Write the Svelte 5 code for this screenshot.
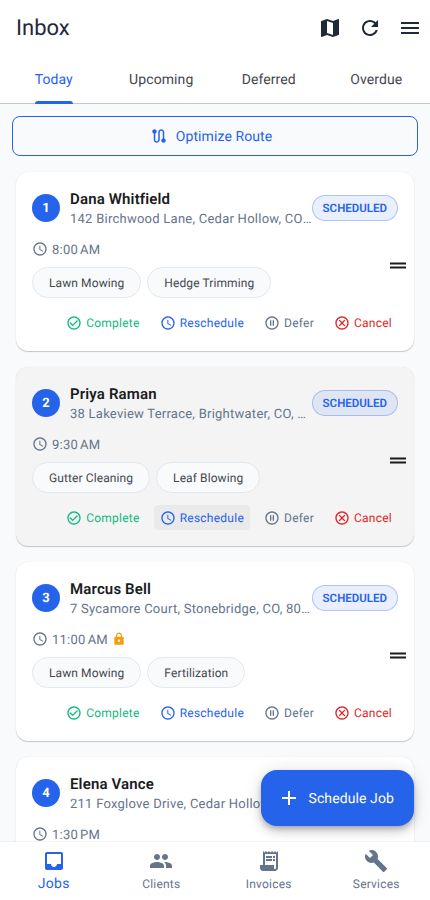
<script>
    // Material icon paths, 24x24
    const icons = {
        map: "M20.5 3l-.16.03L15 5.1 9 3 3.36 4.9c-.21.07-.36.25-.36.48V20.5c0 .28.22.5.5.5l.16-.03L9 18.9l6 2.1 5.64-1.9c.21-.07.36-.25.36-.48V3.5c0-.28-.22-.5-.5-.5zM15 19l-6-2.11V5l6 2.11V19z",
        refresh:
            "M17.65 6.35C16.2 4.9 14.21 4 12 4c-4.42 0-7.99 3.58-7.99 8s3.57 8 7.99 8c3.73 0 6.84-2.55 7.73-6h-2.08c-.82 2.33-3.04 4-5.65 4-3.31 0-6-2.69-6-6s2.69-6 6-6c1.66 0 3.14.69 4.22 1.78L13 11h7V4l-2.35 2.35z",
        menu: "M3 18h18v-2H3v2zm0-5h18v-2H3v2zm0-7v2h18V6H3z",
        route: "M19 15.18V7c0-2.21-1.79-4-4-4s-4 1.79-4 4v10c0 1.1-.9 2-2 2s-2-.9-2-2V8.82C8.16 8.4 9 7.3 9 6c0-1.66-1.34-3-3-3S3 4.34 3 6c0 1.3.84 2.4 2 2.82V17c0 2.21 1.79 4 4 4s4-1.79 4-4V7c0-1.1.9-2 2-2s2 .9 2 2v8.18c-1.16.41-2 1.51-2 2.82 0 1.66 1.34 3 3 3s3-1.34 3-3c0-1.3-.84-2.4-2-2.82z",
        schedule:
            "M11.99 2C6.47 2 2 6.48 2 12s4.47 10 9.99 10C17.52 22 22 17.52 22 12S17.52 2 11.99 2zM12 20c-4.42 0-8-3.58-8-8s3.58-8 8-8 8 3.58 8 8-3.58 8-8 8zm.5-13H11v6l5.25 3.15.75-1.23-4.5-2.67z",
        check: "M16.59 7.58L10 14.17l-3.59-3.58L5 12l5 5 8-8-1.41-1.42zM12 2C6.48 2 2 6.48 2 12s4.48 10 10 10 10-4.48 10-10S17.52 2 12 2zm0 18c-4.42 0-8-3.58-8-8s3.58-8 8-8 8 3.58 8 8-3.58 8-8 8z",
        pause: "M9 16h2V8H9v8zm3-14C6.48 2 2 6.48 2 12s4.48 10 10 10 10-4.48 10-10S17.52 2 12 2zm0 18c-4.41 0-8-3.59-8-8s3.59-8 8-8 8 3.59 8 8-3.59 8-8 8zm1-4h2V8h-2v8z",
        cancel: "M12 2C6.47 2 2 6.47 2 12s4.47 10 10 10 10-4.47 10-10S17.53 2 12 2zm0 18c-4.41 0-8-3.59-8-8s3.59-8 8-8 8 3.59 8 8-3.59 8-8 8zm3.59-13L12 10.59 8.41 7 7 8.41 10.59 12 7 15.59 8.41 17 12 13.41 15.59 17 17 15.59 13.41 12 17 8.41z",
        lock: "M18 8h-1V6c0-2.76-2.24-5-5-5S7 3.24 7 6v2H6c-1.1 0-2 .9-2 2v10c0 1.1.9 2 2 2h12c1.1 0 2-.9 2-2V10c0-1.1-.9-2-2-2zm-6 9c-1.1 0-2-.9-2-2s.9-2 2-2 2 .9 2 2-.9 2-2 2zm3.1-9H8.9V6c0-1.71 1.39-3.1 3.1-3.1 1.71 0 3.1 1.39 3.1 3.1v2z",
        drag: "M20 9H4v2h16V9zM4 15h16v-2H4v2z",
        add: "M19 13h-6v6h-2v-6H5v-2h6V5h2v6h6v2z",
        inbox: "M19 3H4.99C3.88 3 3.01 3.9 3.01 5L3 19c0 1.1.88 2 1.99 2H19c1.1 0 2-.9 2-2V5c0-1.1-.9-2-2-2zm0 12h-4c0 1.66-1.34 3-3 3s-3-1.34-3-3H4.99V5H19v10z",
        people: "M16 11c1.66 0 2.99-1.34 2.99-3S17.66 5 16 5c-1.66 0-3 1.34-3 3s1.34 3 3 3zm-8 0c1.66 0 2.99-1.34 2.99-3S9.66 5 8 5C6.34 5 5 6.34 5 8s1.34 3 3 3zm0 2c-2.33 0-7 1.17-7 3.5V19h14v-2.5c0-2.33-4.67-3.5-7-3.5zm8 0c-.29 0-.62.02-.97.05 1.16.84 1.97 1.97 1.97 3.45V19h6v-2.5c0-2.33-4.67-3.5-7-3.5z",
        receipt:
            "M19.5 3.5L18 2l-1.5 1.5L15 2l-1.5 1.5L12 2l-1.5 1.5L9 2 7.5 3.5 6 2v14H3v3c0 1.66 1.34 3 3 3h12c1.66 0 3-1.34 3-3V2l-1.5 1.5zM19 19c0 .55-.45 1-1 1s-1-.45-1-1v-3H8V5h11v14zM9 7h6v2H9zM16 7h2v2h-2zM9 10h6v2H9zM16 10h2v2h-2z",
        build: "M22.7 19l-9.1-9.1c.9-2.3.4-5-1.5-6.9-2-2-5-2.4-7.4-1.3L9 6 6 9 1.6 4.7C.4 7.1.9 10.1 2.9 12.1c1.9 1.9 4.6 2.4 6.9 1.5l9.1 9.1c.4.4 1 .4 1.4 0l2.3-2.3c.5-.4.5-1.1.1-1.4z",
    };

    const tabs = ["Today", "Upcoming", "Deferred", "Overdue"];
    let activeTab = $state("Today");

    const jobs = [
        {
            name: "Dana Whitfield",
            address: "142 Birchwood Lane, Cedar Hollow, CO 80401",
            time: "8:00",
            period: "AM",
            services: ["Lawn Mowing", "Hedge Trimming"],
        },
        {
            name: "Priya Raman",
            address: "38 Lakeview Terrace, Brightwater, CO, 80402",
            time: "9:30",
            period: "AM",
            services: ["Gutter Cleaning", "Leaf Blowing"],
        },
        {
            name: "Marcus Bell",
            address: "7 Sycamore Court, Stonebridge, CO, 80403",
            time: "11:00",
            period: "AM",
            locked: true,
            services: ["Lawn Mowing", "Fertilization"],
        },
        {
            name: "Elena Vance",
            address: "211 Foxglove Drive, Cedar Hollow, CO 80401",
            time: "1:30",
            period: "PM",
            services: ["Lawn Mowing"],
        },
    ];
    let pressed = $state(1);

    const actions = [
        { label: "Complete", icon: "check" },
        { label: "Reschedule", icon: "schedule" },
        { label: "Defer", icon: "pause" },
        { label: "Cancel", icon: "cancel" },
    ];

    const nav = [
        { label: "Jobs", icon: "inbox" },
        { label: "Clients", icon: "people" },
        { label: "Invoices", icon: "receipt" },
        { label: "Services", icon: "build" },
    ];
    let page = $state("Jobs");
</script>

{#snippet icon(name, size = 24)}
    <svg width={size} height={size} viewBox="0 0 24 24" fill="currentColor">
        <path d={icons[name]} />
    </svg>
{/snippet}

<div class="app">
    <header>
        <h1>Inbox</h1>
        <button aria-label="Map">{@render icon("map")}</button>
        <button aria-label="Refresh">{@render icon("refresh")}</button>
        <button aria-label="Menu">{@render icon("menu")}</button>
    </header>

    <div class="tabs">
        {#each tabs as tab}
            <button
                class="tab"
                class:active={tab === activeTab}
                onclick={() => (activeTab = tab)}
            >
                <span>{tab}</span>
            </button>
        {/each}
    </div>

    <main>
        <button class="optimize">
            {@render icon("route", 18)}
            <span>Optimize Route</span>
        </button>

        <ul>
            {#each jobs as job, i}
                <li>
                    <div class="card" class:pressed={i === pressed}>
                        <div class="top">
                            <div class="number">{i + 1}</div>
                            <div class="who">
                                <div class="name">{job.name}</div>
                                <div class="address">{job.address}</div>
                            </div>
                            <div class="status">SCHEDULED</div>
                        </div>
                        <div class="time">
                            {@render icon("schedule", 16)}
                            <span class="hour">{job.time}<i></i>{job.period}</span>
                            {#if job.locked}
                                <span class="lock">{@render icon("lock", 14)}</span>
                            {/if}
                        </div>
                        <div class="chips">
                            {#each job.services as service}
                                <span class="chip">{service}</span>
                            {/each}
                        </div>
                        <div class="actions">
                            {#each actions as action}
                                <button class="action {action.icon}">
                                    {@render icon(action.icon, 16)}
                                    <span>{action.label}</span>
                                </button>
                            {/each}
                        </div>
                    </div>
                    <div class="handle">{@render icon("drag")}</div>
                </li>
            {/each}
        </ul>

        <button class="fab">
            {@render icon("add")}
            <span>Schedule Job</span>
        </button>
    </main>

    <nav>
        {#each nav as item}
            <button class:current={item.label === page} onclick={() => (page = item.label)}>
                {@render icon(item.icon)}
                <span>{item.label}</span>
            </button>
        {/each}
    </nav>
</div>

<style>
    :global(body) {
        margin: 0;
    }
    .app {
        height: 100vh;
        display: flex;
        flex-direction: column;
        overflow: hidden;
        background: #f8fafc;
        font-family: Roboto, sans-serif;
        text-rendering: geometricPrecision;
    }
    .app * {
        box-sizing: border-box;
    }
    button {
        border: none;
        background: none;
        padding: 0;
        margin: 0;
        font: inherit;
        color: inherit;
        text-rendering: inherit;
        cursor: pointer;
    }
    svg {
        display: block;
        flex: none;
    }

    header {
        flex: none;
        height: 56px;
        display: flex;
        align-items: center;
        gap: 16px;
        padding: 0 8px 0 16px;
        background: #fff;
        color: #1e293b;
    }
    h1 {
        flex: 1;
        margin: 0;
        padding-top: 2px;
        font-size: 22px;
        font-weight: 400;
        line-height: 28px;
    }

    .tabs {
        flex: none;
        height: 48px;
        display: flex;
        background: #fff;
        border-bottom: 1px solid #c5c6d0;
    }
    .tab {
        flex: 1;
        display: flex;
        justify-content: center;
        color: #45464f;
        font-size: 14px;
        letter-spacing: 0.1px;
    }
    .tab span {
        height: 48px;
        line-height: 48px;
    }
    .tab.active {
        color: #2563eb;
    }
    .tab.active span {
        position: relative;
    }
    .tab.active span::after {
        content: "";
        position: absolute;
        left: 0;
        right: 0;
        bottom: 0;
        height: 3px;
        border-radius: 3px 3px 0 0;
        background: #2563eb;
    }

    main {
        flex: 1;
        min-height: 0;
        position: relative;
        overflow: hidden;
    }
    .optimize {
        width: calc(100% - 24px);
        height: 40px;
        margin: 12px 12px 12px;
        padding-right: 8px;
        display: flex;
        align-items: center;
        justify-content: center;
        gap: 8px;
        border: 1px solid #2563eb;
        border-radius: 8px;
        color: #2563eb;
        font-size: 14px;
        letter-spacing: 0.1px;
    }
    .optimize span,
    .fab span {
        padding-top: 2px;
    }
    ul {
        list-style: none;
        margin: 0;
        padding: 0;
    }
    li {
        position: relative;
        padding: 4px 16px 12px;
    }
    .card {
        height: 179px;
        padding: 16px;
        border-radius: 12px;
        background: #fff;
        box-shadow:
            0 1px 1px rgba(0, 0, 0, 0.2),
            0 0 1px rgba(0, 0, 0, 0.12);
    }
    .card.pressed {
        background: #f4f4f4;
    }
    .top {
        height: 40px;
        display: flex;
        align-items: center;
    }
    .number {
        flex: none;
        width: 28px;
        height: 28px;
        margin-right: 10px;
        border-radius: 50%;
        background: #2563eb;
        color: #fff;
        font-size: 13px;
        font-weight: 700;
        line-height: 30px;
        text-align: center;
    }
    .who {
        flex: 1;
        min-width: 0;
    }
    .name {
        color: #1a1b21;
        font-size: 15px;
        font-weight: 600;
        line-height: 22px;
        letter-spacing: 0.15px;
    }
    .address {
        height: 18px;
        overflow: hidden;
        white-space: nowrap;
        text-overflow: ellipsis;
        color: #64748b;
        font-size: 13px;
        line-height: 20px;
        letter-spacing: 0.25px;
    }
    .status {
        flex: none;
        height: 26px;
        padding: 0 10px;
        border: 1px solid rgba(37, 99, 235, 0.3);
        border-radius: 13px;
        background: rgba(37, 99, 235, 0.1);
        color: #2563eb;
        font-size: 11.5px;
        font-weight: 600;
        line-height: 24px;
    }
    .time {
        height: 20px;
        margin-top: 11px;
        display: flex;
        align-items: center;
        gap: 4px;
        color: #64748b;
        font-size: 13px;
        letter-spacing: 0.25px;
    }
    .hour {
        padding-top: 2px;
    }
    .hour i {
        display: inline-block;
        width: 2px;
    }
    .lock {
        color: #f59e0b;
    }
    .chips {
        display: flex;
        gap: 6px;
        margin-top: 8px;
    }
    .chip {
        height: 31px;
        padding: 0 16px;
        border: 1px solid #e2e8f0;
        border-radius: 16px;
        background: #f8fafc;
        color: #45464f;
        font-size: 12px;
        line-height: 30px;
        letter-spacing: 0.1px;
    }
    .actions {
        display: flex;
        justify-content: flex-end;
        gap: 8px;
        margin-top: 12px;
    }
    .action {
        height: 25px;
        padding: 0 6px;
        display: flex;
        align-items: center;
        gap: 4px;
        border-radius: 4px;
        font-size: 12px;
        letter-spacing: 0.25px;
    }
    .check {
        color: #10b981;
    }
    .schedule {
        color: #2563eb;
    }
    .pressed .schedule {
        background: #eaeaea;
    }
    .pause {
        color: #64748b;
    }
    .cancel {
        color: #dc2626;
    }
    .handle {
        position: absolute;
        top: 0;
        bottom: 1px;
        right: 20px;
        display: flex;
        align-items: center;
        color: #1a1b21;
        transform: translateY(0.5px);
    }

    .fab {
        position: absolute;
        right: 16px;
        bottom: 16px;
        height: 56px;
        padding: 0 20px 0 16px;
        display: flex;
        align-items: center;
        gap: 8px;
        border-radius: 16px;
        background: #2563eb;
        color: #fff;
        font-size: 14px;
        letter-spacing: 0.1px;
        box-shadow:
            0 3px 5px -1px rgba(0, 0, 0, 0.2),
            0 6px 10px rgba(0, 0, 0, 0.14),
            0 1px 18px rgba(0, 0, 0, 0.12);
    }

    nav {
        flex: none;
        height: 58px;
        display: flex;
        position: relative;
        background: #fff;
        box-shadow: 0 -1px 1px rgba(0, 0, 0, 0.04);
    }
    nav button {
        flex: 1;
        display: flex;
        flex-direction: column;
        align-items: center;
        padding-top: 7px;
        color: #64748b;
        font-size: 12px;
        letter-spacing: 0.2px;
    }
    nav span {
        line-height: 23px;
    }
    nav .current {
        color: #2563eb;
        font-size: 14px;
        letter-spacing: 0.3px;
    }
</style>
